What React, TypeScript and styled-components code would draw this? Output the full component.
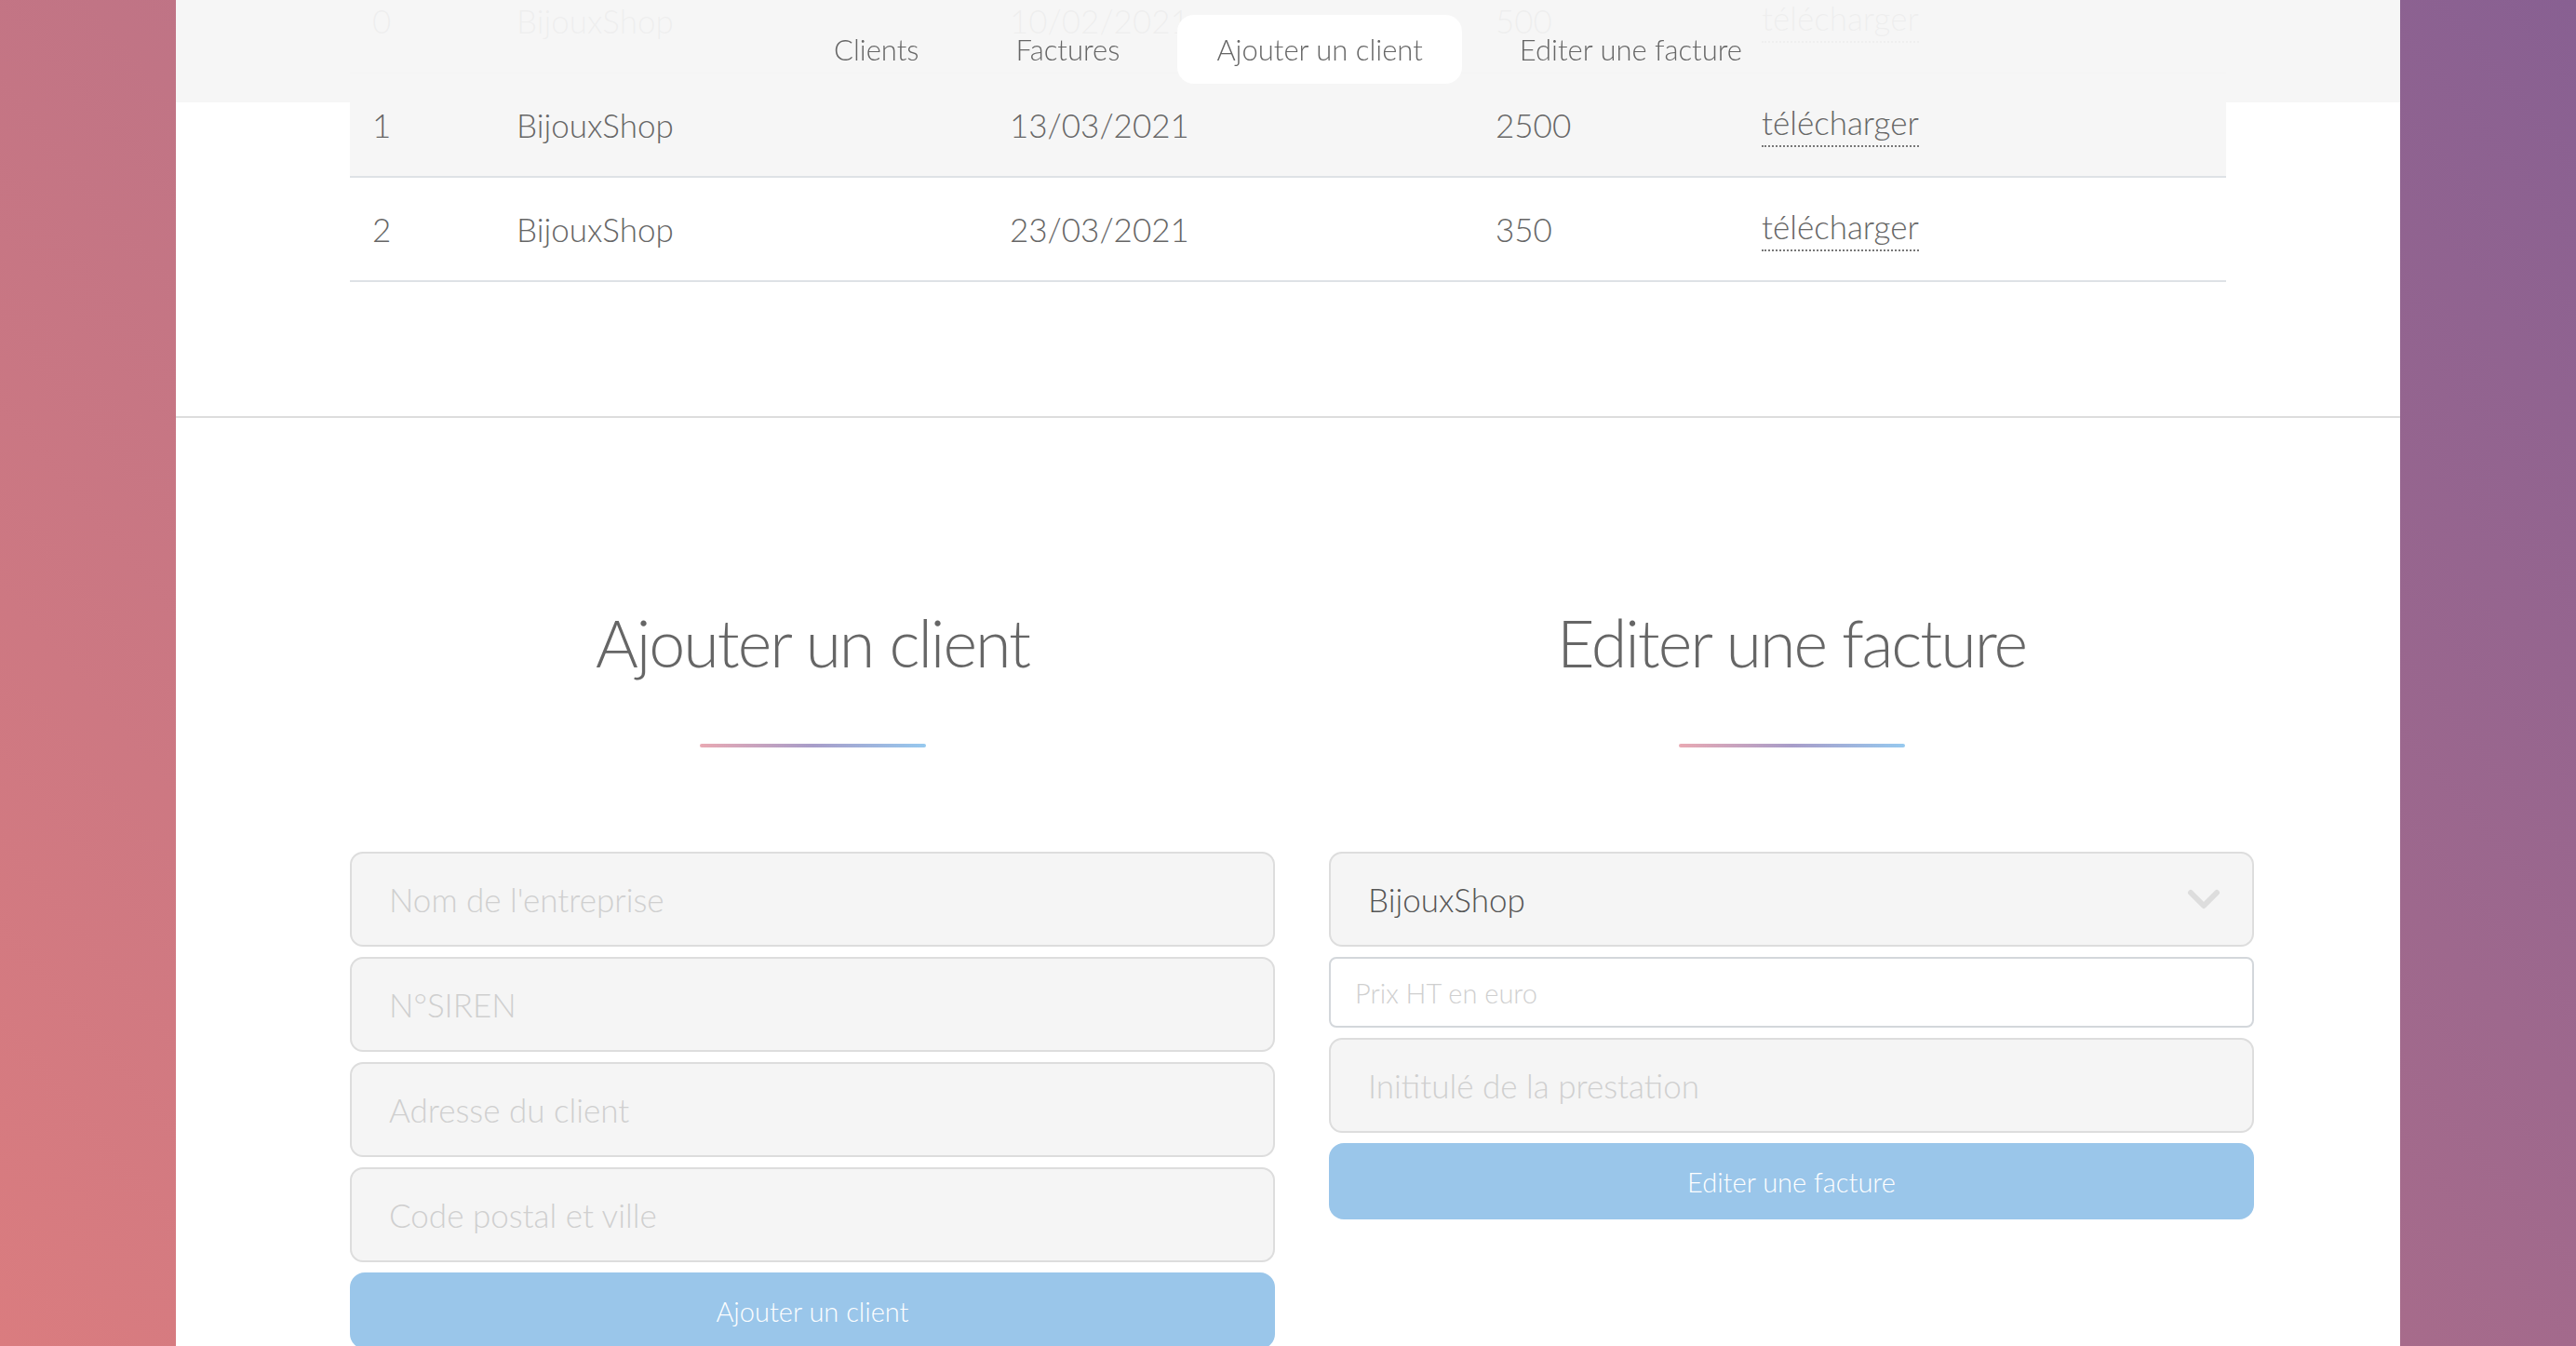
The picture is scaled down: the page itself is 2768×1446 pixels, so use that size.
import { useLayoutEffect, useRef } from "react";
import styled, { createGlobalStyle } from "styled-components";

const GlobalStyle = createGlobalStyle`
  * { box-sizing: border-box; }
  html, body { margin: 0; height: 100%; overflow: hidden; }
  body {
    font-family: Lato, "Open Sans", sans-serif;
    font-weight: 300;
    color: #666;
    background: linear-gradient(50deg, #da7c7f 0%, #b47088 50%, #886092 100%);
  }
`;

const Scroller = styled.div`
  height: 100vh;
  overflow-y: auto;
  scrollbar-width: none;
  &::-webkit-scrollbar { display: none; }
`;

const Page = styled.main`
  width: 2390px;
  margin: 0 auto;
  background: #fff;
`;

const Nav = styled.nav`
  position: fixed;
  top: 0;
  left: 50%;
  transform: translateX(-50%);
  z-index: 10;
  width: 2390px;
  height: 110px;
  padding-bottom: 4px;
  display: flex;
  justify-content: center;
  align-items: center;
  gap: 20px;
  background: rgba(246, 246, 246, 0.95);
`;

const NavLink = styled.a<{ $active?: boolean }>`
  display: flex;
  align-items: center;
  height: 74px;
  padding: 0 42px;
  border-radius: 18px;
  font-size: 31px;
  color: #666;
  text-decoration: none;
  background: ${({ $active }) => ($active ? "#fff" : "transparent")};
`;

const TableSection = styled.section`
  padding: 190px 187px 144px;
  border-bottom: 2px solid #ddd;
`;

const Title = styled.h2`
  margin: 0;
  text-align: center;
  font-size: 70px;
  font-weight: 300;
  line-height: 1.2;
  letter-spacing: -2px;
  color: #666;
`;

const Underline = styled.div`
  width: 243px;
  height: 4px;
  margin: 67px auto 0;
  border-radius: 2px;
  background: linear-gradient(to right, #e9a9b3, #a89dc9, #96c9ef);
`;

const Table = styled.div`
  margin-top: 112px;
`;

const Row = styled.div<{ $striped?: boolean; $head?: boolean }>`
  display: grid;
  grid-template-columns: 155px 530px 522px 286px 522px;
  align-items: center;
  height: 112px;
  border-bottom: 2px solid #dee2e6;
  background: ${({ $striped }) => ($striped ? "#f6f6f6" : "#fff")};
  font-size: 35px;
  font-weight: ${({ $head }) => ($head ? 700 : 300)};
`;

const Cell = styled.div`
  padding-left: 24px;
  white-space: nowrap;
`;

const Download = styled.a`
  display: inline-block;
  line-height: 1.15;
  padding-bottom: 4px;
  color: #666;
  text-decoration: none;
  border-bottom: 2px dotted #777;
`;

const FormsSection = styled.section`
  display: grid;
  grid-template-columns: 994px 994px;
  column-gap: 58px;
  padding: 199px 0 200px 187px;
`;

const FormColumn = styled.div`
  display: flex;
  flex-direction: column;
`;

const Form = styled.form`
  display: flex;
  flex-direction: column;
  gap: 11px;
  margin-top: 112px;
`;

const Field = styled.input`
  width: 100%;
  height: 102px;
  padding: 0 40px;
  border: 2px solid #ddd;
  border-radius: 14px;
  background: #f5f5f5;
  font-family: inherit;
  font-weight: 300;
  font-size: 35px;
  color: #555;
  outline: none;
  &::placeholder { color: #cfcfcf; }
`;

const PriceField = styled(Field)`
  height: 76px;
  padding: 0 26px;
  border-color: #d3d7db;
  border-radius: 8px;
  background: #fff;
  font-size: 29px;
`;

const SelectWrap = styled.div`
  position: relative;
`;

const Select = styled.select`
  width: 100%;
  height: 102px;
  padding: 0 40px;
  border: 2px solid #ddd;
  border-radius: 14px;
  background: #f5f5f5;
  font-family: inherit;
  font-weight: 300;
  font-size: 35px;
  color: #555;
  appearance: none;
  outline: none;
`;

const Chevron = styled.svg`
  position: absolute;
  right: 36px;
  top: 50%;
  transform: translateY(-50%);
  pointer-events: none;
`;

const SubmitButton = styled.button`
  width: 100%;
  height: 82px;
  border: none;
  border-radius: 16px;
  background: #9ac6ea;
  color: #fff;
  font-family: inherit;
  font-weight: 300;
  font-size: 29px;
`;

const invoices = [
  { id: 0, client: "BijouxShop", date: "10/02/2021", amount: "500" },
  { id: 1, client: "BijouxShop", date: "13/03/2021", amount: "2500" },
  { id: 2, client: "BijouxShop", date: "23/03/2021", amount: "350" },
];

const App = () => {
  const scrollerRef = useRef<HTMLDivElement>(null);
  const firstRowRef = useRef<HTMLDivElement>(null);

  // page is scrolled so that the first invoice row sits under the nav
  useLayoutEffect(() => {
    const scroller = scrollerRef.current;
    const row = firstRowRef.current;
    if (!scroller || !row) return;
    scroller.scrollTop =
      row.getBoundingClientRect().top - scroller.getBoundingClientRect().top + 33;
  }, []);

  return (
    <>
      <GlobalStyle />
      <Scroller ref={scrollerRef}>
        <Nav>
          <NavLink href="#clients">Clients</NavLink>
          <NavLink href="#factures">Factures</NavLink>
          <NavLink href="#ajouter" $active>
            Ajouter un client
          </NavLink>
          <NavLink href="#editer">Editer une facture</NavLink>
        </Nav>
        <Page>
          <TableSection id="factures">
            <Title>Factures</Title>
            <Underline />
            <Table>
              <Row $head>
                <Cell>#</Cell>
                <Cell>Client</Cell>
                <Cell>Date</Cell>
                <Cell>Montant HT</Cell>
                <Cell>Facture</Cell>
              </Row>
              {invoices.map((inv, i) => (
                <Row
                  key={inv.id}
                  ref={i === 0 ? firstRowRef : undefined}
                  $striped={i % 2 === 1}
                >
                  <Cell>{inv.id}</Cell>
                  <Cell>{inv.client}</Cell>
                  <Cell>{inv.date}</Cell>
                  <Cell>{inv.amount}</Cell>
                  <Cell>
                    <Download href="#">télécharger</Download>
                  </Cell>
                </Row>
              ))}
            </Table>
          </TableSection>

          <FormsSection>
            <FormColumn id="ajouter">
              <Title>Ajouter un client</Title>
              <Underline />
              <Form onSubmit={(e) => e.preventDefault()}>
                <Field placeholder="Nom de l'entreprise" />
                <Field placeholder="N°SIREN" />
                <Field placeholder="Adresse du client" />
                <Field placeholder="Code postal et ville" />
                <SubmitButton type="submit">Ajouter un client</SubmitButton>
              </Form>
            </FormColumn>
            <FormColumn id="editer">
              <Title>Editer une facture</Title>
              <Underline />
              <Form onSubmit={(e) => e.preventDefault()}>
                <SelectWrap>
                  <Select defaultValue="BijouxShop">
                    <option>BijouxShop</option>
                  </Select>
                  <Chevron width="36" height="24" viewBox="0 0 36 24">
                    <polyline
                      points="4,5 18,19 32,5"
                      fill="none"
                      stroke="#ddd"
                      strokeWidth="6"
                      strokeLinecap="round"
                      strokeLinejoin="round"
                    />
                  </Chevron>
                </SelectWrap>
                <PriceField placeholder="Prix HT en euro" />
                <Field placeholder="Inititulé de la prestation" />
                <SubmitButton type="submit">Editer une facture</SubmitButton>
              </Form>
            </FormColumn>
          </FormsSection>
        </Page>
      </Scroller>
    </>
  );
};

export default App;
